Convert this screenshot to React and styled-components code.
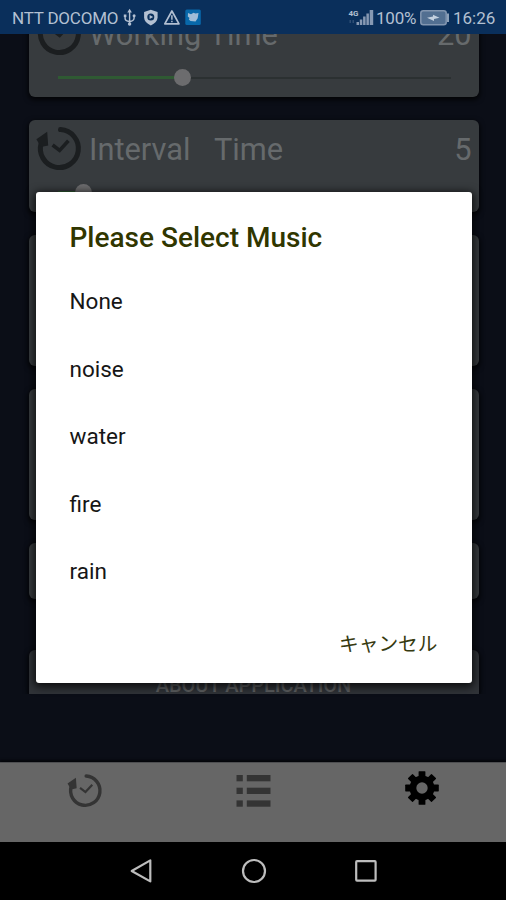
import React from 'react';
import styled, { createGlobalStyle } from 'styled-components';

const sounds = ['None', 'noise', 'water', 'fire', 'rain'];

function HistoryIcon({ size, color, bold }) {
  return (
    <svg width={size} height={size} viewBox="0 0 44 44" fill="none" stroke={color}>
      <path d="M23.5 2.6A19 19 0 1 1 4.2 16" strokeWidth={bold ? 5 : 4.4} strokeLinecap="round" />
      <path d="M-0.6 12.2L10.2 4.8L11.2 18.6L4 20Z" fill={color} stroke="none" />
      <path d="M15.6 18L22.6 23.4L31.4 13.8" strokeWidth={bold ? 3.6 : 2.8} />
    </svg>
  );
}

function StatusIcons() {
  return (
    <svg width="80" height="20" viewBox="0 0 80 20" fill="none" stroke="#b3c0d2">
      <path d="M7.6 3V17M3.1 8V10.5Q3.1 13 7.6 13.5Q12.1 13 12.1 10V8" strokeWidth="1.4" />
      <path d="M7.6 0.8L9.9 4.5H5.3Z" fill="#b3c0d2" stroke="none" />
      <circle cx="7.6" cy="16" r="1.7" fill="#b3c0d2" stroke="none" />
      <rect x="1.8" y="6.5" width="2.6" height="2.6" fill="#b3c0d2" stroke="none" />
      <circle cx="12.1" cy="7.8" r="1.5" fill="#b3c0d2" stroke="none" />
      <path d="M28.8 1.8L35.6 4V9.5Q35.3 14.5 28.8 17.4Q22.3 14.5 22.1 9.5V4Z" fill="#b3c0d2" stroke="none" />
      <circle cx="28.8" cy="9" r="3.5" fill="#0b305c" stroke="none" />
      <path d="M27.6 7L31.1 9L27.6 11Z" fill="#b3c0d2" stroke="none" />
      <path d="M49.9 3L57 15.8H42.8Z" strokeWidth="1.7" strokeLinejoin="round" />
      <path d="M49.9 7.2V11.7M49.9 12.8V14.3" strokeWidth="1.5" />
      <rect x="63.3" y="1.5" width="15.5" height="15.5" rx="1.5" fill="#0868aa" stroke="none" />
      <path d="M66 5L69 6.3L71.5 4.7L73.5 5.5L76.5 5L75.7 10.2L73.5 13.5L68.5 13L66.8 11.5L67.5 10L65.8 8.5Z" fill="#9fbdd8" stroke="none" />
    </svg>
  );
}

function SignalIcon() {
  return (
    <svg width="27" height="20" viewBox="0 0 27 20" fill="#8799b3">
      <text x="0.5" y="7.5" fontSize="8" fontWeight="700" fontFamily="Roboto, sans-serif" fill="#b3c0d2">4G</text>
      <path d="M1.5 12H3V15H1.5ZM4.5 12H6V15H4.5Z" opacity="0.3" />
      <path d="M8.5 14H11V17H8.5ZM11.8 11.5H14.3V17H11.8ZM15.1 8.5H17.6V17H15.1ZM18.4 5.5H20.9V17H18.4ZM21.7 2H25.2V17H21.7Z" />
    </svg>
  );
}

function BatteryIcon() {
  return (
    <svg width="30" height="16" viewBox="0 0 30 16">
      <rect x="0.8" y="0.8" width="25.4" height="14" rx="2.5" fill="#526f91" stroke="#8296b0" strokeWidth="1.5" />
      <rect x="27" y="3.5" width="2" height="8.5" fill="#8ca0b8" />
      <path d="M7 7.8L13 6.5V4.8L19.5 7.8L14 9V11Z" fill="#c3d0df" />
    </svg>
  );
}

function ListIcon() {
  return (
    <svg width="35" height="33" viewBox="0 0 35 33" fill="#343434">
      {[0, 12.7, 25.4].map(y => (
        <React.Fragment key={y}>
          <rect x="0.5" y={y} width="6.3" height="6.3" />
          <rect x="10.8" y={y} width="23.7" height="6.3" />
        </React.Fragment>
      ))}
    </svg>
  );
}

function GearIcon() {
  return (
    <svg width="34" height="34" viewBox="-17 -17 34 34">
      {[0, 45, 90, 135].map(angle => (
        <rect key={angle} x="-3.4" y="-16.8" width="6.8" height="33.6" rx="0.6" transform={`rotate(${angle})`} />
      ))}
      <circle r="12.5" />
      <circle r="5.7" fill="#666" />
    </svg>
  );
}

function TimeCard({ label, value, percent }) {
  return (
    <Card $height={92}>
      <CardHead>
        <HistoryIcon size={44} color="#1b1e20" bold />
        <CardLabel>{label}</CardLabel>
        <CardValue>{value}</CardValue>
      </CardHead>
      <Track>
        <Progress style={{ width: `${percent}%` }} />
        <Thumb />
      </Track>
    </Card>
  );
}

export default function App() {
  return (
    <Screen>
      <GlobalStyle />
      <StatusBar>
        <Carrier>NTT DOCOMO</Carrier>
        <StatusIcons />
        <Spacer />
        <SignalIcon />
        <Percent>100%</Percent>
        <BatteryIcon />
        <Clock>16:26</Clock>
      </StatusBar>
      <Settings>
        <CardList>
          <TimeCard label="Working Time" value="20" percent={31.7} />
          <TimeCard label="Interval   Time" value="5" percent={6.4} />
          <Card $height={131} />
          <Card $height={131} />
          <Card $height={56} />
          <AboutCard $height={56}>ABOUT APPLICATION</AboutCard>
        </CardList>
      </Settings>
      <TabBar>
        <Tab $top={12}><HistoryIcon size={34} color="#343434" /></Tab>
        <Tab $top={13}><ListIcon /></Tab>
        <Tab $top={9}><GearIcon /></Tab>
      </TabBar>
      <NavBar>
        <svg width="24" height="26" viewBox="0 0 24 26" fill="none" stroke="#bdbdbd" strokeWidth="2.2" strokeLinejoin="round">
          <path d="M20.3 2.4V23.4L1.7 13Z" />
        </svg>
        <svg width="26" height="26" viewBox="0 0 26 26" fill="none" stroke="#bdbdbd" strokeWidth="2.2">
          <circle cx="13" cy="13" r="11" />
        </svg>
        <svg width="24" height="24" viewBox="0 0 24 24" fill="none" stroke="#bdbdbd" strokeWidth="2.2">
          <rect x="2.2" y="2.2" width="19.4" height="19.4" rx="0.8" />
        </svg>
      </NavBar>
      <Dialog>
        <Title>Please Select Music</Title>
        {sounds.map(sound => <Option key={sound}>{sound}</Option>)}
        <Cancel>キャンセル</Cancel>
      </Dialog>
    </Screen>
  );
}

const GlobalStyle = createGlobalStyle`
  body {
    margin: 0;
    background: #0b0e17;
  }
  * {
    box-sizing: border-box;
  }
  svg {
    display: block;
    flex-shrink: 0;
    overflow: visible;
  }
`;
const Screen = styled.div`
  position: relative;
  width: 506px;
  height: 900px;
  display: flex;
  flex-direction: column;
  overflow: hidden;
  background: #0b0e17;
  font-family: Roboto, 'Noto Sans CJK JP', sans-serif;
`;
const StatusBar = styled.div`
  height: 34px;
  flex-shrink: 0;
  display: flex;
  align-items: center;
  padding: 1px 10px 0 12px;
  background: #0a2f5b;
  color: #b3c0d2;
  font-size: 17px;
`;
const Carrier = styled.span`
  width: 110px;
  white-space: nowrap;
  letter-spacing: -0.2px;
`;
const Spacer = styled.div`
  flex: 1;
`;
const Percent = styled.span`
  width: 44px;
  margin-left: 1px;
  letter-spacing: -0.2px;
`;
const Clock = styled.span`
  width: 43px;
  margin-left: 3px;
`;
const Settings = styled.div`
  height: 660px;
  flex-shrink: 0;
  overflow: hidden;
  padding: 0 27.5px 0 28.5px;
`;
const CardList = styled.div`
  display: flex;
  flex-direction: column;
  gap: 23px;
  margin-top: -29px;
`;
const Card = styled.div`
  height: ${props => props.$height}px;
  flex-shrink: 0;
  border-radius: 6px;
  background: #373b3e;
  box-shadow: 0 2px 5px 1px rgba(0, 0, 0, 0.75);
`;
const AboutCard = styled(Card)`
  margin-top: 28px;
  padding-top: 23px;
  text-align: center;
  color: #5d5f61;
  background: #303338;
  font-size: 20px;
  font-weight: 500;
  line-height: 24px;
`;
const CardHead = styled.div`
  height: 58px;
  display: flex;
  align-items: center;
  padding: 0 7px 0 8px;
`;
const CardLabel = styled.span`
  flex: 1;
  margin-left: 8.5px;
  white-space: pre;
  color: #666a6c;
  font-size: 30.8px;
  word-spacing: 0.4px;
`;
const CardValue = styled.span`
  color: #666a6c;
  font-size: 30.8px;
`;
const Track = styled.div`
  height: 2px;
  margin: 13.5px 28px 0 29px;
  display: flex;
  align-items: center;
  background: #2b3031;
`;
const Progress = styled.div`
  height: 3px;
  background: #2f5a33;
`;
const Thumb = styled.div`
  width: 17px;
  height: 17px;
  flex-shrink: 0;
  margin-left: -8px;
  border-radius: 50%;
  background: #6c6c6e;
`;
const TabBar = styled.div`
  height: 80px;
  margin-top: 68px;
  flex-shrink: 0;
  display: grid;
  grid-template-columns: repeat(3, 1fr);
  border-top: 1px solid #4d4e50;
  background: #666;
  box-shadow: 0 -2px 2px #05060a;
`;
const Tab = styled.div`
  display: flex;
  justify-content: center;
  align-items: flex-start;
  padding: ${props => props.$top - 1}px 0 0 1.4px;
`;
const NavBar = styled.div`
  height: 58px;
  flex-shrink: 0;
  display: flex;
  align-items: center;
  justify-content: center;
  gap: 87px;
  padding-left: 2px;
  background: #000;
`;
const Dialog = styled.div`
  position: absolute;
  left: 35.5px;
  top: 192px;
  width: 436px;
  height: 491px;
  display: flex;
  flex-direction: column;
  border-radius: 3px;
  background: #fff;
  box-shadow: 0 2px 8px 2px rgba(0, 0, 0, 0.75);
`;
const Title = styled.div`
  height: 75.5px;
  padding: 29px 34px 0;
  color: #303600;
  font-size: 28px;
  font-weight: 500;
  line-height: 34px;
`;
const Option = styled.div`
  height: 67.5px;
  display: flex;
  align-items: center;
  padding: 0 34px;
  color: #161616;
  font-size: 22.5px;
`;
const Cancel = styled.div`
  margin-top: 26px;
  padding-right: 34px;
  text-align: right;
  color: #363a10;
  font-size: 19.7px;
  line-height: 28px;
`;
